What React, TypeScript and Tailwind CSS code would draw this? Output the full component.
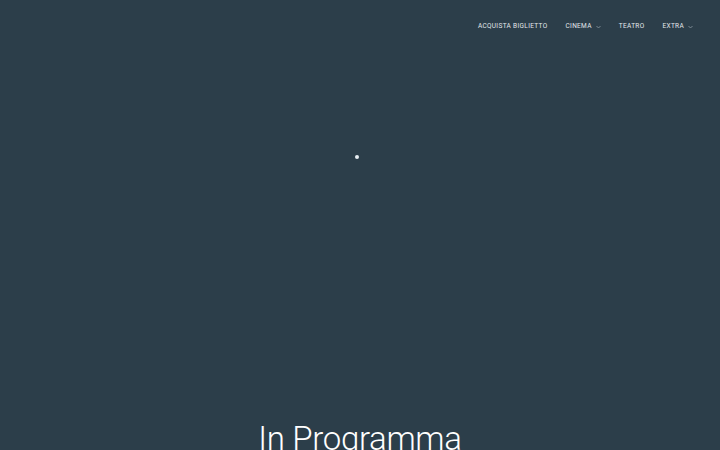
import React from "react";

const Chevron = () => (
  <svg width="5" height="4" viewBox="0 0 5 4" className="ml-[4px]" fill="none">
    <path d="M0.5 1 L2.5 3 L4.5 1" stroke="#8e9aa3" strokeWidth="0.8" />
  </svg>
);

export default function App() {
  return (
    <div
      className="w-[720px] h-[450px] overflow-hidden bg-[#2c3e4a] flex flex-col"
      style={{ fontFamily: "Roboto, 'Open Sans', sans-serif" }}
    >
      <nav className="shrink-0 flex justify-end items-center h-[53px] pr-[27px]">
        <ul className="flex items-center gap-[18px] text-[6.5px] tracking-[0.05em] text-[#e3e8ec] uppercase font-normal">
          <li>Acquista Biglietto</li>
          <li className="flex items-center">Cinema<Chevron /></li>
          <li>Teatro</li>
          <li className="flex items-center">Extra<Chevron /></li>
        </ul>
      </nav>
      <div className="shrink-0 h-[369px] flex items-start justify-center">
        <div className="mt-[102px] w-[4px] h-[4px] rounded-full bg-[#e8eef2] -translate-x-[3px]" />
      </div>
      <h2 className="shrink-0 text-center text-[33px] font-light text-white leading-none tracking-[-0.01em]">
        In Programma
      </h2>
    </div>
  );
}
